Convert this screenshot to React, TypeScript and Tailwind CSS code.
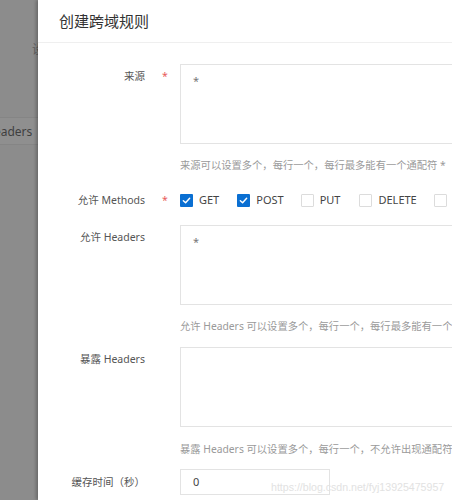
import React from "react";

const font = { fontFamily: '"Noto Sans", "Noto Sans CJK SC", sans-serif' };

function Check({ checked, label, className }: { checked?: boolean; label?: string; className?: string }) {
  return (
    <div className={"flex items-center " + (className || "")}>
      {checked ? (
        <span className="flex h-[13px] w-[13px] items-center justify-center rounded-[1px] bg-[#0a6fd2]">
          <svg width="9" height="9" viewBox="0 0 10 10" fill="none">
            <path d="M1.5 5.2 L4 7.5 L8.5 2.6" stroke="white" strokeWidth="1.6" strokeLinecap="round" strokeLinejoin="round" />
          </svg>
        </span>
      ) : (
        <span className="h-[13px] w-[13px] rounded-[1px] border border-[#dcdcdc] bg-white" />
      )}
      {label && <span className="ml-[6px] text-[11px] leading-[18px] text-[#444]">{label}</span>}
    </div>
  );
}

function Label({ text, required }: { text: string; required?: boolean }) {
  return (
    <div className="flex w-[142px] shrink-0">
      <div className="w-[107px] whitespace-nowrap text-right text-[10.5px] leading-[18px] text-[#555]">{text}</div>
      <div className="w-[35px] pl-[17px] text-[10.5px] leading-[18px] text-[#e85a5a]">{required ? "*" : ""}</div>
    </div>
  );
}

function Helper({ text, className }: { text: string; className?: string }) {
  return (
    <div className={"flex " + (className || "")}>
      <div className="w-[142px] shrink-0" />
      <div className="whitespace-nowrap text-[10.3px] leading-[16px] text-[#9a9a9a]">{text}</div>
    </div>
  );
}

function TextArea({ value }: { value?: string }) {
  return (
    <div className="h-[80px] w-[320px] shrink-0 border border-[#e3e3e3] bg-white px-[12px] pt-[8px] text-[11px] leading-[16px] text-[#777]">
      {value}
    </div>
  );
}

export default function App() {
  return (
    <div className="relative flex h-[500px] w-[452px] overflow-hidden bg-white" style={font}>
      {/* masked underlying page */}
      <div className="relative h-full w-[38px] shrink-0 overflow-hidden bg-[#8c8c8c]">
        <div className="absolute left-[32px] top-[42px] whitespace-nowrap text-[12px] leading-[16px] text-[#5e5e5e]">设置</div>
        <div className="mt-[117px] h-[28px] border-t border-b border-[#858585] bg-[#8f8f8f]">
          <div className="-ml-[15px] whitespace-nowrap text-[12px] leading-[27px] text-[#3f3f3f]">Headers</div>
        </div>
      </div>
      {/* drawer */}
      <div className="relative h-full flex-1 overflow-hidden bg-white shadow-[-2px_0_3px_rgba(0,0,0,0.25)]">
        <div className="flex h-[43px] items-center border-b border-[#efefef] pl-[21px]">
          <span className="text-[15px] leading-[20px] text-[#333]">创建跨域规则</span>
        </div>
        <div className="pt-[21px]">
          <div className="flex">
            <div className="pt-[3px]">
              <Label text="来源" required />
            </div>
            <TextArea value="*" />
          </div>
          <Helper className="mt-[13px]" text="来源可以设置多个，每行一个，每行最多能有一个通配符 *" />
          <div className="mt-[17px] flex h-[20px] items-center">
            <Label text="允许 Methods" required />
            <Check checked label="GET" />
            <Check checked label="POST" className="ml-[18px]" />
            <Check label="PUT" className="ml-[17px]" />
            <Check label="DELETE" className="ml-[19px]" />
            <Check className="ml-[17px]" />
          </div>
          <div className="mt-[15px] flex">
            <div className="pt-[3px]">
              <Label text="允许 Headers" />
            </div>
            <TextArea value="*" />
          </div>
          <Helper className="mt-[13px]" text="允许 Headers 可以设置多个，每行一个，每行最多能有一个通配符 *" />
          <div className="mt-[13px] flex">
            <div className="pt-[3px]">
              <Label text="暴露 Headers" />
            </div>
            <TextArea />
          </div>
          <Helper className="mt-[14px]" text="暴露 Headers 可以设置多个，每行一个，不允许出现通配符 *" />
          <div className="mt-[12px] flex items-center">
            <Label text="缓存时间（秒）" />
            <div className="flex h-[26px] w-[150px] items-center border border-[#e3e3e3] bg-white pl-[12px] text-[11px] text-[#444]">
              0
            </div>
          </div>
        </div>
        <div
          className="pointer-events-none absolute left-[233px] top-[478px] whitespace-nowrap text-[10.6px] leading-[18px] text-[#e2e2e2]"
          style={{ fontFamily: '"Liberation Sans", Arial, sans-serif' }}
        >
          https://blog.csdn.net/fyj13925475957
        </div>
      </div>
    </div>
  );
}
